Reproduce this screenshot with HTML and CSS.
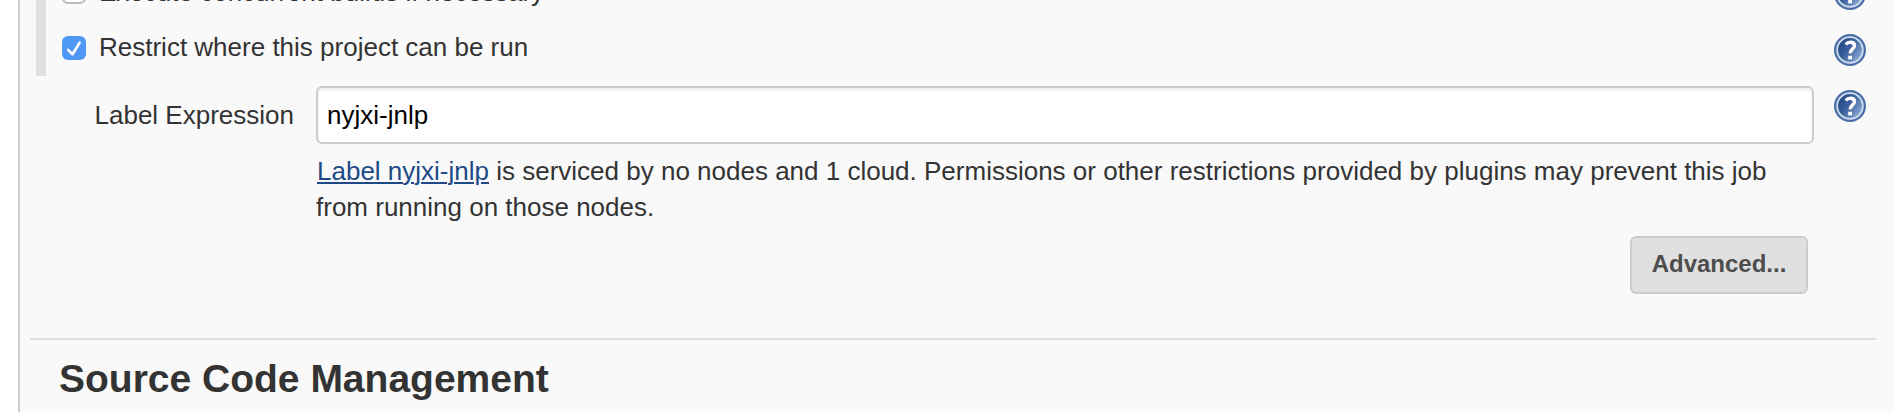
FILE: index.html
```
<!DOCTYPE html>
<html lang="en">
<head>
<meta charset="utf-8">
<title>Job configuration</title>
<link rel="stylesheet" href="styles.css">
</head>
<body>
<svg class="defs" width="0" height="0" aria-hidden="true">
  <defs>
    <linearGradient id="help-fill" x1="0" y1="0.2" x2="1" y2="0.9">
      <stop offset="0" stop-color="#20427f"/>
      <stop offset="0.4" stop-color="#3b5e9c"/>
      <stop offset="1" stop-color="#9ab8de"/>
    </linearGradient>
    <symbol id="help" viewBox="0 0 32 32">
      <circle cx="16" cy="16" r="16" fill="#4a6ea8"/>
      <circle cx="16" cy="16" r="12.8" fill="url(#help-fill)" stroke="#d3deee" stroke-width="1.8"/>
      <path d="M11.7 10.3c1.2-1.3 2.8-2 4.6-2 2.8 0 4.2 1.3 4.2 3.3 0 3.4-4.4 3.4-4.4 7.6" fill="none" stroke="#fff" stroke-width="3.4"/>
      <rect x="14.2" y="21.8" width="3.8" height="3.5" fill="#fff"/>
    </symbol>
  </defs>
</svg>
<main class="panel">
  <div class="group">
    <label class="row">
      <span class="check"></span>
      <span class="text text-concurrent">Execute concurrent builds if necessary</span>
      <svg class="help"><use href="#help"/></svg>
    </label>
    <label class="row">
      <span class="check checked"><svg viewBox="0 0 24 24"><path d="M6.2 13.8l4.3 4.5 7.1-11.6"/></svg></span>
      <span class="text">Restrict where this project can be run</span>
      <svg class="help"><use href="#help"/></svg>
    </label>
  </div>
  <div class="field">
    <label class="field-label" for="label-expr">Label Expression</label>
    <div class="field-body">
      <input id="label-expr" class="input" type="text" value="nyjxi-jnlp" spellcheck="false">
      <div class="note"><a class="link" href="#">Label nyjxi-jnlp</a> is serviced by no nodes and 1 cloud. Permissions or other restrictions provided by plugins may prevent this job<br>from running on those nodes.</div>
    </div>
    <svg class="help"><use href="#help"/></svg>
  </div>
  <div class="actions"><button class="button" type="button">Advanced...</button></div>
  <section class="section">
    <h2 class="heading">Source Code Management</h2>
  </section>
</main>
</body>
</html>
```
FILE: styles.css
```
* { box-sizing: border-box; }
body {
  margin: 0;
  height: 412px;
  overflow: hidden;
  background: #fff;
  color: #333;
  font: 26px/36px "Liberation Sans", Arial, sans-serif;
}
.defs { position: absolute; }
.panel {
  height: 412px;
  margin-left: 18px;
  border-left: 2px solid #ccc;
  background: #f9f9f9;
  overflow: hidden;
}
.group {
  margin: -36px 0 0 16px;
  border-left: 10px solid #e0e0e0;
}
.row {
  display: flex;
  align-items: flex-start;
  height: 56px;
  padding: 0 28px 0 16px;
}
.check {
  flex: none;
  width: 24px;
  height: 24px;
  margin-top: 16px;
  border: 2px solid #bdbdbd;
  border-radius: 6px;
  background: #fff;
}
.checked { border: 0; background: #5098f6; }
.checked svg { display: block; width: 24px; height: 24px; }
.checked path {
  fill: none;
  stroke: #fff;
  stroke-width: 2.6;
  stroke-linecap: round;
  stroke-linejoin: round;
}
.text {
  padding: 9px 0 0 13px;
  flex: 1;
  white-space: nowrap;
}
.text-concurrent { padding-top: 10px; }
.help { flex: none; width: 32px; height: 32px; margin-top: 14px; }
.field {
  display: flex;
  align-items: flex-start;
  padding: 10px 28px 0 0;
}
.field-label {
  width: 296px;
  padding: 11px 22px 0 0;
  text-align: right;
  white-space: nowrap;
}
.field-body { flex: 1; margin-right: 20px; }
.field .help { margin-top: 4px; }
.input {
  display: block;
  width: 100%;
  height: 58px;
  padding: 0 9px;
  border: 2px solid #ccc;
  border-radius: 6px;
  background: #fff;
  box-shadow: inset 0 2px 3px rgba(0, 0, 0, 0.08);
  color: #000;
  font: inherit;
}
.note { margin: 9px 0 1px; white-space: nowrap; }
.link {
  margin-left: 1px;
  color: #204a87;
  text-decoration-thickness: 2px;
  text-underline-offset: 2px;
}
.actions {
  display: flex;
  justify-content: flex-end;
  padding: 10px 86px 0 0;
}
.button {
  width: 178px;
  height: 58px;
  padding: 0 0 2px;
  border: 2px solid #ccc;
  border-radius: 6px;
  background: #e0e0e0;
  color: #4d4d4d;
  font: bold 24px/30px "Liberation Sans", Arial, sans-serif;
}
.section {
  margin: 44px 18px 0 10px;
  border-top: 2px solid #ddd;
}
.heading {
  margin: 0;
  padding: 17px 0 0 29px;
  font-size: 39px;
  line-height: 44px;
  white-space: nowrap;
}
```
